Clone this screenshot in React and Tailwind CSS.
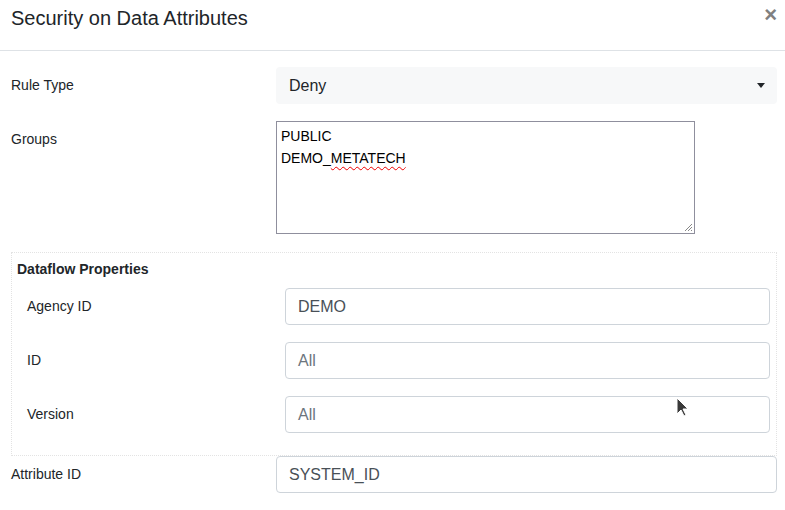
const font = { fontFamily: '"Liberation Sans", Arial, sans-serif' }

function Label({ children }) {
  return <div className="pt-2 text-[14px] leading-[20px] text-[#212529]">{children}</div>
}

function Field({ value, placeholder }) {
  return (
    <div className="h-[37px] w-full rounded-[4px] border border-[#ced4da] bg-white px-3 flex items-center text-[16px]">
      {value ? <span className="text-[#495057]">{value}</span> : <span className="text-[#6c757d]">{placeholder}</span>}
    </div>
  )
}

export default function App() {
  return (
    <div style={font} className="w-[785px] h-[510px] bg-white relative overflow-hidden text-[#212529]">
      <div className="h-[51px] border-b border-[#dee2e6] flex items-start justify-between pl-[11px] pr-[8px]">
        <h5 className="pt-[6px] text-[20px] leading-[24px] text-[#212529]">Security on Data Attributes</h5>
        <span className="pt-[3px] text-[22px] leading-[24px] font-bold text-[#808080]">×</span>
      </div>

      <div className="pl-[11px] pr-[8px]">
        <div className="flex mt-[16px]">
          <div className="w-[265px] shrink-0"><Label>Rule Type</Label></div>
          <div className="flex-1 h-[37px] rounded-[4px] bg-[#f7f8f9] pl-[13px] pr-[12px] flex items-center justify-between">
            <span className="text-[16px]">Deny</span>
            <svg width="8" height="5" viewBox="0 0 8 5"><path d="M0 0h8L4 5z" fill="#212529" /></svg>
          </div>
        </div>

        <div className="flex mt-[17px]">
          <div className="w-[265px] shrink-0"><Label>Groups</Label></div>
          <div className="relative w-[419px] h-[113px] border border-[#8f8f9d] px-[4px] pt-[3px] text-[14px] leading-[22px] text-black">
            <div>PUBLIC</div>
            <div>DEMO_<span className="underline decoration-wavy decoration-[#e00] decoration-1 underline-offset-[3px]">METATECH</span></div>
            <svg className="absolute right-[1px] bottom-[1px]" width="10" height="10" viewBox="0 0 10 10">
              <path d="M9 2L2 9M9 5L5 9M9 8L8 9" stroke="#888" strokeWidth="1" />
            </svg>
          </div>
        </div>

        <div className="mt-[18px] border border-dotted border-[#e3e3e3] pl-[5px] pr-[6px] pb-[22px]">
          <div className="pt-[6px] text-[14px] leading-[20px] font-bold">Dataflow Properties</div>
          <div className="pl-[10px] flex flex-col gap-[17px] mt-[9px]">
            <div className="flex">
              <div className="w-[258px] shrink-0"><Label>Agency ID</Label></div>
              <Field value="DEMO" />
            </div>
            <div className="flex">
              <div className="w-[258px] shrink-0"><Label>ID</Label></div>
              <Field placeholder="All" />
            </div>
            <div className="flex">
              <div className="w-[258px] shrink-0"><Label>Version</Label></div>
              <Field placeholder="All" />
            </div>
          </div>
        </div>

        <div className="flex">
          <div className="w-[265px] shrink-0"><Label>Attribute ID</Label></div>
          <div className="flex-1 h-[37px] rounded-[4px] border border-[#ced4da] bg-white pl-[12px] flex items-center text-[16px] text-[#495057]">SYSTEM_ID</div>
        </div>
      </div>

      <svg className="absolute left-[676px] top-[397px]" width="14" height="22" viewBox="0 0 14 22">
        <path d="M1 1v16l4-4 3 6 2-1-3-6h5z" fill="#3a3a3a" stroke="#fff" strokeWidth="1" />
      </svg>
    </div>
  )
}
